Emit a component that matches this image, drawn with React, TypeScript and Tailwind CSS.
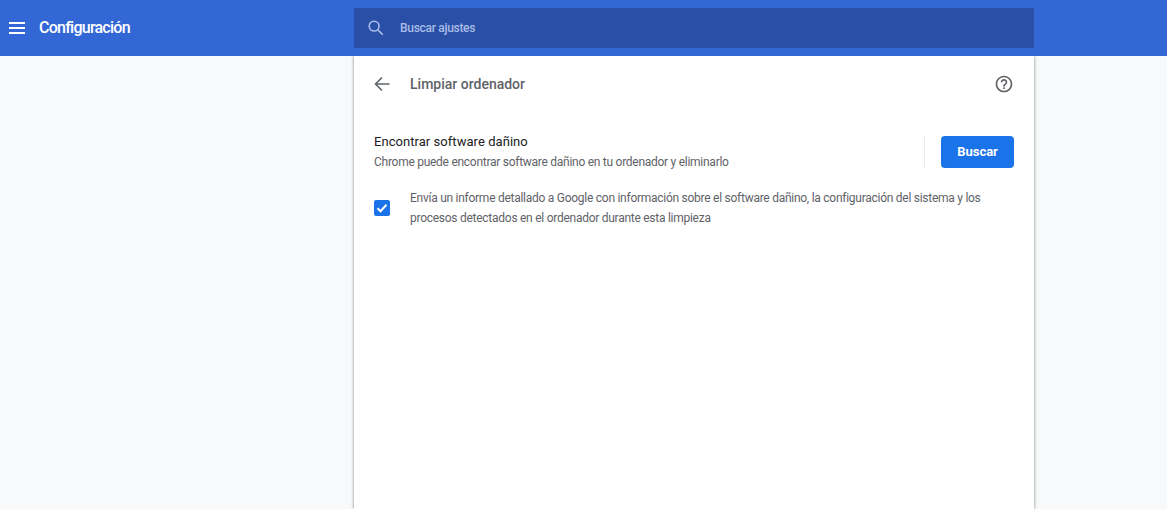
import React from "react";

export default function App() {
  return (
    <div className="h-[509px] w-full overflow-hidden bg-[#f8f9fa] font-['Roboto',sans-serif] flex flex-col">
      <header className="h-14 shrink-0 bg-[#3367d6] flex items-center relative z-10">
        <div className="w-[354px] shrink-0 flex items-center pl-[9px]">
          <svg width="16" height="12" viewBox="0 0 16 12" className="block">
            <path d="M0 0h16v2H0zM0 5h16v2H0zM0 10h16v2H0z" fill="#fff" />
          </svg>
          <span className="ml-[14px] text-white text-[16px] font-medium leading-none tracking-[-0.75px]">Configuración</span>
        </div>
        <div className="w-[680px] h-10 bg-[#2a4fa6] flex items-center pl-[13px]">
          <svg width="18" height="18" viewBox="0 0 24 24" fill="none" stroke="#a9bde8" strokeWidth="2.2">
            <circle cx="9.5" cy="9.5" r="6.5" />
            <path d="M14.5 14.5 21 21" />
          </svg>
          <span className="ml-[15px] text-[12px] font-medium text-[#a9bde8] leading-none tracking-[-0.3px]">Buscar ajustes</span>
        </div>
      </header>
      <main className="flex-1 flex">
        <div className="w-[354px] shrink-0" />
        <section className="w-[680px] bg-white shadow-[0_0_3px_rgba(60,64,67,0.65)]">
          <div className="h-14 flex items-center pl-5 pr-5">
            <svg width="16" height="16" viewBox="0 0 16 16" fill="none" stroke="#5f6368" strokeWidth="1.6">
              <path d="M15.5 8H1.5M8 1.5 1.5 8 8 14.5" />
            </svg>
            <h1 className="ml-5 text-[14px] font-medium text-[#5f6368] leading-none">Limpiar ordenador</h1>
            <svg className="ml-auto" width="20" height="20" viewBox="0 0 24 24" fill="#5f6368">
              <path d="M11 18h2v-2h-2v2zm1-16C6.48 2 2 6.48 2 12s4.48 10 10 10 10-4.48 10-10S17.52 2 12 2zm0 18c-4.41 0-8-3.59-8-8s3.59-8 8-8 8 3.59 8 8-3.59 8-8 8zm0-14c-2.21 0-4 1.79-4 4h2c0-1.1.9-2 2-2s2 .9 2 2c0 2-3 1.75-3 5h2c0-2.25 3-2.5 3-5 0-2.21-1.79-4-4-4z" />
            </svg>
          </div>
          <div className="mt-5 flex items-center pl-5 pr-5">
            <div className="flex-1">
              <div className="text-[13px] font-normal text-[#202124] leading-5 tracking-[0.05px]">Encontrar software dañino</div>
              <div className="text-[12px] text-[#5f6368] leading-5 tracking-[-0.27px]">Chrome puede encontrar software dañino en tu ordenador y eliminarlo</div>
            </div>
            <div className="w-px h-8 bg-[#e8eaed] mr-4" />
            <button className="w-[73px] h-8 rounded bg-[#1a73e8] text-white text-[13px] font-bold">Buscar</button>
          </div>
          <div className="mt-4 flex items-center pl-5 pr-5">
            <div className="w-4 h-4 rounded-[2px] bg-[#1a73e8] flex items-center justify-center shrink-0">
              <svg width="12" height="12" viewBox="0 0 12 12" fill="none" stroke="#fff" strokeWidth="2">
                <path d="M1.5 6.2 4.5 9.2 10.5 2.8" />
              </svg>
            </div>
            <p className="ml-5 text-[12px] text-[#5f6368] leading-5 tracking-[-0.265px]">
              Envía un informe detallado a Google con información sobre el software dañino, la configuración del sistema y los procesos detectados en el ordenador durante esta limpieza
            </p>
          </div>
        </section>
      </main>
    </div>
  );
}
